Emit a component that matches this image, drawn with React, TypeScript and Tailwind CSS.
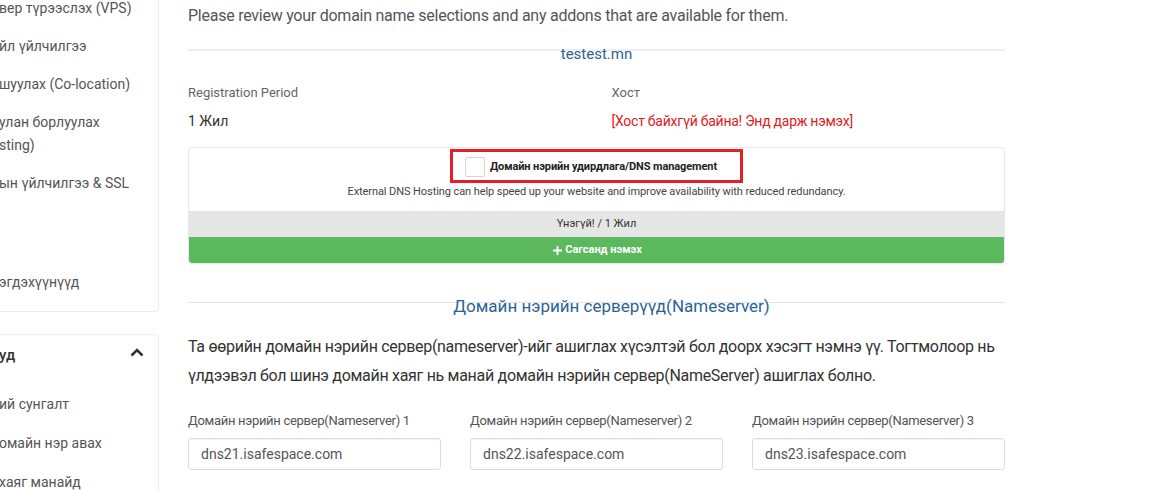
import { Plus } from 'lucide-react';

const topItems = [
  ['вер түрээслэх (VPS)'],
  ['йл үйлчилгээ'],
  ['шуулах (Co-location)'],
  ['улан борлуулах', 'sting)'],
  ['ын үйлчилгээ & SSL'],
  ['', ''],
  ['эгдэхүүнүүд'],
];

const domainItems = ['ий сунгалт', 'омайн нэр авах', 'хаяг манайд'];

const nameservers = [
  'dns21.isafespace.com',
  'dns22.isafespace.com',
  'dns23.isafespace.com',
];

function SectionTitle({
  title,
  thick,
  size,
}: {
  title: string;
  thick?: boolean;
  size: string;
}) {
  return (
    <div>
      <div className={thick ? 'border-t-2 border-[#eeeeee]' : 'border-t border-[#e3e3e3]'} />
      <h3 className={`-mt-[6px] text-center leading-[18px] text-[#2a6496] ${size}`}>
        {title}
      </h3>
    </div>
  );
}

function Sidebar() {
  return (
    <aside className="-ml-[20px] w-[179px] shrink-0 text-[14px] text-[#555]">
      <div className="-mt-[28px] rounded-b-[4px] border border-[#ececec] pb-[10px] pl-[18px] pt-[16px]">
        {topItems.map((lines, i) => (
          <div key={i} className="whitespace-nowrap py-[7.5px] leading-[23px]">
            {lines.map((line, j) => (
              <div key={j} className="h-[23px]">
                {line}
              </div>
            ))}
          </div>
        ))}
      </div>

      <div className="mt-[22px] rounded-[4px] border border-[#ececec] pl-[18px]">
        <div className="flex items-center justify-between pr-[14px] pt-[8px]">
          <span className="text-[15px] font-medium leading-[24px] text-[#333]">уд</span>
          <svg width="14" height="9" viewBox="0 0 14 9" className="-mt-[5px]">
            <path
              d="M1.5 7.5 L7 2 L12.5 7.5"
              fill="none"
              stroke="#333"
              strokeWidth="2.6"
            />
          </svg>
        </div>
        <div className="pt-[18px]">
          {domainItems.map((item) => (
            <div key={item} className="whitespace-nowrap py-[8px] leading-[23px]">
              {item}
            </div>
          ))}
        </div>
      </div>
    </aside>
  );
}

export default function App() {
  return (
    <div className="h-[490px] w-[1160px] overflow-hidden bg-white font-['Roboto',sans-serif]">
      <div className="flex gap-[29px]">
        <Sidebar />

        <main className="w-[817px] shrink-0 pt-[4px]">
          <p className="text-[16px] leading-[24px] tracking-[-0.25px] text-[#555]">
            Please review your domain name selections and any addons that are
            available for them.
          </p>

          <div className="mt-[21px]">
            <SectionTitle title="testest.mn" thick size="text-[15px]" />
          </div>

          <div className="mt-[21px] grid grid-cols-2 gap-x-[30px]">
            <div>
              <div className="text-[13px] leading-[18px] text-[#666]">
                Registration Period
              </div>
              <div className="mt-[9px] text-[14px] leading-[20px] text-[#333]">
                1 Жил
              </div>
            </div>
            <div>
              <div className="text-[13px] leading-[18px] text-[#666]">Хост</div>
              <div className="mt-[9px] text-[14px] leading-[20px] tracking-[-0.25px] text-[#e0201b]">
                [Хост байхгүй байна! Энд дарж нэмэх]
              </div>
            </div>
          </div>

          <div className="mt-[16px] overflow-hidden rounded-[4px] border border-[#e8e8e8] shadow-[0_1px_2px_rgba(0,0,0,0.05)]">
            <div className="flex justify-center pt-[1px]">
              <label className="inline-flex items-center border-[3px] border-[#e41e26] pb-[3px] pl-[12px] pr-[23px] pt-[5px]">
                <span className="h-[20px] w-[20px] rounded-[2px] border border-[#d5d5d5] bg-white" />
                <span className="ml-[5px] text-[11px] font-bold tracking-[-0.1px] text-[#222]">
                  Домайн нэрийн удирдлага/DNS management
                </span>
              </label>
            </div>
            <p className="mt-[1px] text-center text-[11px] leading-[16px] tracking-[-0.08px] text-[#444]">
              External DNS Hosting can help speed up your website and improve
              availability with reduced redundancy.
            </p>
            <div className="mt-[11px] flex h-[26px] items-center justify-center bg-[#e6e6e6] text-[11px] text-[#333]">
              Үнэгүй! / 1 Жил
            </div>
            <button className="flex h-[26px] w-full items-center justify-center bg-[#5cb85c] text-[11px] font-bold text-white">
              <Plus size={13} strokeWidth={3.5} className="mr-[1px]" />
              Сагсанд нэмэх
            </button>
          </div>

          <div className="mt-[38px]">
            <SectionTitle
              title="Домайн нэрийн серверүүд(Nameserver)"
              size="pl-[30px] text-[17px]"
            />
          </div>

          <p className="mt-[17px] text-[16px] leading-[29px] tracking-[-0.3px] text-[#333]">
            Та өөрийн домайн нэрийн сервер(nameserver)-ийг ашиглах хүсэлтэй бол
            доорх хэсэгт нэмнэ үү. Тогтмолоор нь үлдээвэл бол шинэ домайн хаяг
            нь манай домайн нэрийн сервер(NameServer) ашиглах болно.
          </p>

          <div className="mt-[22px] grid grid-cols-3 gap-x-[29px]">
            {nameservers.map((ns, i) => (
              <div key={ns}>
                <label className="block text-[13px] leading-[18px] tracking-[-0.3px] text-[#555]">
                  Домайн нэрийн сервер(Nameserver) {i + 1}
                </label>
                <input
                  type="text"
                  defaultValue={ns}
                  className="mt-[8px] h-[32px] w-full rounded-[3px] border border-[#ddd] px-[12px] text-[14px] text-[#555] shadow-[inset_0_1px_1px_rgba(0,0,0,0.05)] outline-none"
                />
              </div>
            ))}
          </div>
        </main>
      </div>
    </div>
  );
}
